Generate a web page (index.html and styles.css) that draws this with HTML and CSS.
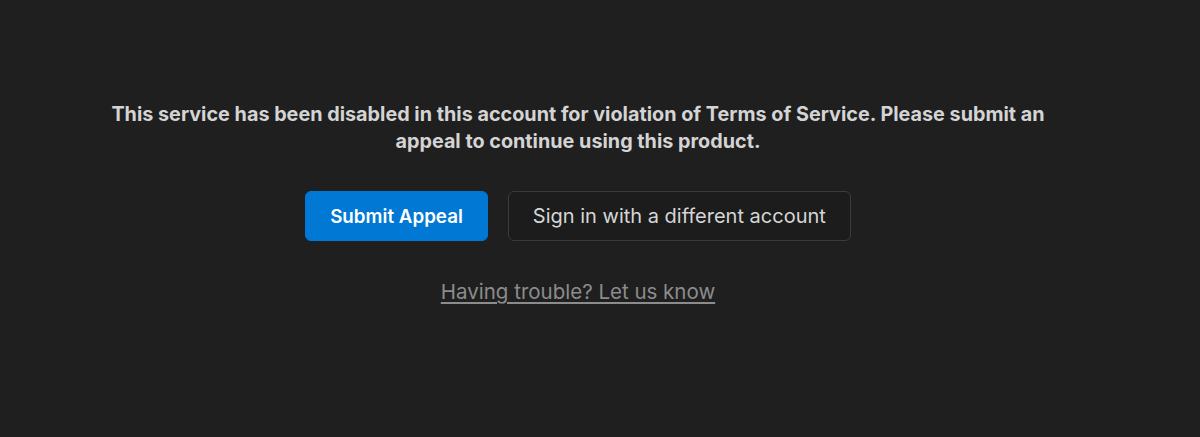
FILE: index.html
```html
<!DOCTYPE html>
<html lang="en">
<head>
<meta charset="utf-8">
<title>Service disabled</title>
<link rel="stylesheet" href="styles.css">
</head>
<body>
<main class="page">
  <p class="message">This service has been disabled in this account for violation of Terms of Service. Please submit an appeal to continue using this product.</p>
  <div class="actions">
    <button class="btn btn-primary" type="button">Submit Appeal</button>
    <button class="btn btn-secondary" type="button">Sign in with a different account</button>
  </div>
  <a class="help-link" href="#">Having trouble? Let us know</a>
</main>
</body>
</html>
```

FILE: styles.css
```css
html, body {
  margin: 0;
  padding: 0;
  height: 100%;
  background: #1f1f1f;
}
body {
  font-family: Inter, "Noto Sans", "Liberation Sans", sans-serif;
  color: #d6d6d6;
}
.page {
  display: flex;
  flex-direction: column;
  align-items: center;
  padding-top: 101px;
  padding-right: 44px;
}
.message {
  margin: 0;
  max-width: 960px;
  text-align: center;
  font-size: 19.8px;
  font-weight: 700;
  line-height: 27px;
  color: #d4d4d4;
}
.actions {
  display: flex;
  gap: 20px;
  margin-top: 36px;
}
.btn {
  font-family: inherit;
  height: 50px;
  padding: 0 24px;
  border-radius: 6px;
  cursor: pointer;
}
.btn-primary {
  background: #0078d4;
  color: #ffffff;
  border: 1px solid #0078d4;
  font-size: 18.8px;
  font-weight: 600;
}
.btn-secondary {
  background: #1c1c1c;
  color: #d6d6d6;
  border: 1px solid #3b3b3b;
  font-size: 20px;
  font-weight: 400;
}
.help-link {
  margin-top: 38px;
  font-size: 20.5px;
  color: #8c8c8c;
  text-decoration: underline;
  text-underline-offset: 3px;
}
```
